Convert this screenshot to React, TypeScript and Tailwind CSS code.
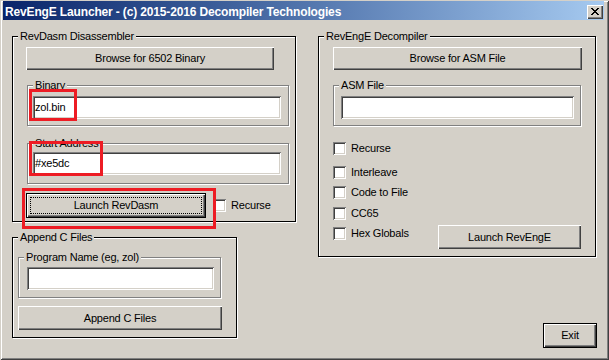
import React from "react";

const raised =
  "bg-[#d4d0c8] shadow-[inset_1px_1px_0_#fff,inset_-1px_-1px_0_#404040,inset_-2px_-2px_0_#808080]";
const sunken =
  "bg-white shadow-[inset_1px_1px_0_#808080,inset_-1px_-1px_0_#fff,inset_2px_2px_0_#404040,inset_-2px_-2px_0_#d4d0c8]";

function Btn({ className = "", children }: { className?: string; children: React.ReactNode }) {
  return (
    <div className={`flex items-center justify-center ${raised} ${className}`}>
      <span>{children}</span>
    </div>
  );
}

function DefaultBtn({
  className = "",
  focus = false,
  children,
}: {
  className?: string;
  focus?: boolean;
  children: React.ReactNode;
}) {
  return (
    <div className={`border border-black ${className}`}>
      <div className={`relative w-full h-full flex items-center justify-center ${raised}`}>
        {focus && (
          <div className="absolute left-[3px] top-[3px] right-[3px] bottom-[3px] border border-dotted border-black" />
        )}
        <span>{children}</span>
      </div>
    </div>
  );
}

function Group({
  label,
  dark = false,
  className = "",
  children,
}: {
  label: string;
  dark?: boolean;
  className?: string;
  children?: React.ReactNode;
}) {
  return (
    <div
      className={`relative flex flex-col shrink-0 border ${
        dark ? "border-black" : "border-[#808080]"
      } shadow-[1px_1px_0_#fff,inset_1px_1px_0_#fff] ${className}`}
    >
      <div className="absolute left-[5px] -top-[8px] px-[2px] bg-[#d4d0c8] leading-[14px] whitespace-nowrap">
        {label}
      </div>
      {children}
    </div>
  );
}

function Input({ className = "", value = "" }: { className?: string; value?: string }) {
  return (
    <div className={`flex items-center pl-[2px] ${sunken} ${className}`}>
      <span>{value}</span>
    </div>
  );
}

function Check({ label, className = "" }: { label: string; className?: string }) {
  return (
    <div className={`flex items-center ${className}`}>
      <div className={`w-[13px] h-[13px] shrink-0 ${sunken}`} />
      <span className="ml-[5px] leading-[13px]">{label}</span>
    </div>
  );
}

function CloseGlyph() {
  const rows = [
    [0, 1, 6, 7],
    [1, 2, 5, 6],
    [2, 3, 4, 5],
    [3, 4],
    [2, 3, 4, 5],
    [1, 2, 5, 6],
    [0, 1, 6, 7],
  ];
  return (
    <svg width="8" height="7" viewBox="0 0 8 7" shapeRendering="crispEdges">
      {rows.map((r, y) =>
        r.map((x) => <rect key={`${x}-${y}`} x={x} y={y} width="1" height="1" fill="#000" />)
      )}
    </svg>
  );
}

function RedBox({ className }: { className: string }) {
  return <div className={`absolute border-[3px] border-[#ed1c24] pointer-events-none ${className}`} />;
}

export default function App() {
  return (
    <div className="relative w-[609px] h-[360px] overflow-hidden bg-[#d4d0c8] font-['Liberation_Sans',Arial,sans-serif] text-[11px] tracking-[-0.2px] text-black shadow-[inset_1px_1px_0_#d4d0c8,inset_-1px_-1px_0_#404040,inset_2px_2px_0_#fff,inset_-2px_-2px_0_#808080] pt-[1px] pl-[3px]">
      {/* Title bar */}
      <div className="w-[601px] h-[19px] flex items-center justify-between bg-gradient-to-r from-[#0a246a] to-[#a6caf0] pl-[2px] pr-[1px] pt-[2px]">
        <span className="text-white font-bold text-[12px] tracking-[-0.15px] leading-[14px] whitespace-nowrap">
          RevEngE Launcher - (c) 2015-2016 Decompiler Technologies
        </span>
        <div className={`w-[16px] h-[14px] flex items-center justify-center ${raised}`}>
          <CloseGlyph />
        </div>
      </div>

      <div className="flex">
        {/* Left column */}
        <div className="flex flex-col ml-[9px]">
          <Group label="RevDasm Disassembler" dark className="w-[284px] h-[186px] mt-[16px]">
            <Btn className="ml-[13px] mt-[10px] w-[248px] h-[23px]">Browse for 6502 Binary</Btn>
            <Group label="Binary" className="ml-[14px] mt-[15px] w-[262px] h-[41px]">
              <Input className="ml-[5px] mt-[10px] w-[248px] h-[23px]" value="zol.bin" />
            </Group>
            <Group label="Start Address" className="ml-[14px] mt-[17px] w-[262px] h-[41px]">
              <Input className="ml-[5px] mt-[8px] w-[248px] h-[23px]" value="#xe5dc" />
            </Group>
            <div className="flex items-center mt-[9px]">
              <DefaultBtn focus className="ml-[13px] w-[180px] h-[25px]">
                Launch RevDasm
              </DefaultBtn>
              <Check label="Recurse" className="ml-[7px]" />
            </div>
          </Group>

          <Group label="Append C Files" dark className="w-[225px] h-[101px] mt-[15px]">
            <Group label="Program Name (eg, zol)" className="ml-[5px] mt-[19px] w-[203px] h-[41px]">
              <Input className="ml-[8px] mt-[9px] w-[187px] h-[23px]" />
            </Group>
            <Btn className="ml-[5px] mt-[8px] w-[204px] h-[24px]">Append C Files</Btn>
          </Group>
        </div>

        {/* Right column */}
        <div className="flex flex-col ml-[22px]">
          <Group label="RevEngE Decompiler" dark className="w-[278px] h-[221px] mt-[16px]">
            <Btn className="ml-[14px] mt-[10px] w-[249px] h-[23px]">Browse for ASM File</Btn>
            <Group label="ASM File" className="ml-[14px] mt-[15px] w-[248px] h-[41px]">
              <Input className="ml-[7px] mt-[10px] w-[233px] h-[23px]" />
            </Group>
            <Check label="Recurse" className="ml-[14px] mt-[16px] h-[13px]" />
            <Check label="Interleave" className="ml-[14px] mt-[11px] h-[13px]" />
            <Check label="Code to File" className="ml-[14px] mt-[7px] h-[13px]" />
            <Check label="CC65" className="ml-[14px] mt-[8px] h-[13px]" />
            <div className="flex items-start ml-[14px] mt-[5px]">
              <Check label="Hex Globals" className="w-[105px] mt-[2px] h-[13px]" />
              <Btn className="w-[143px] h-[24px]">Launch RevEngE</Btn>
            </div>
          </Group>
          <DefaultBtn className="ml-[225px] mt-[66px] w-[54px] h-[25px]">Exit</DefaultBtn>
        </div>
      </div>

      <RedBox className="left-[29px] top-[89px] w-[48px] h-[32px]" />
      <RedBox className="left-[29px] top-[141px] w-[74px] h-[35px]" />
      <RedBox className="left-[22px] top-[188px] w-[194px] h-[41px]" />
    </div>
  );
}
